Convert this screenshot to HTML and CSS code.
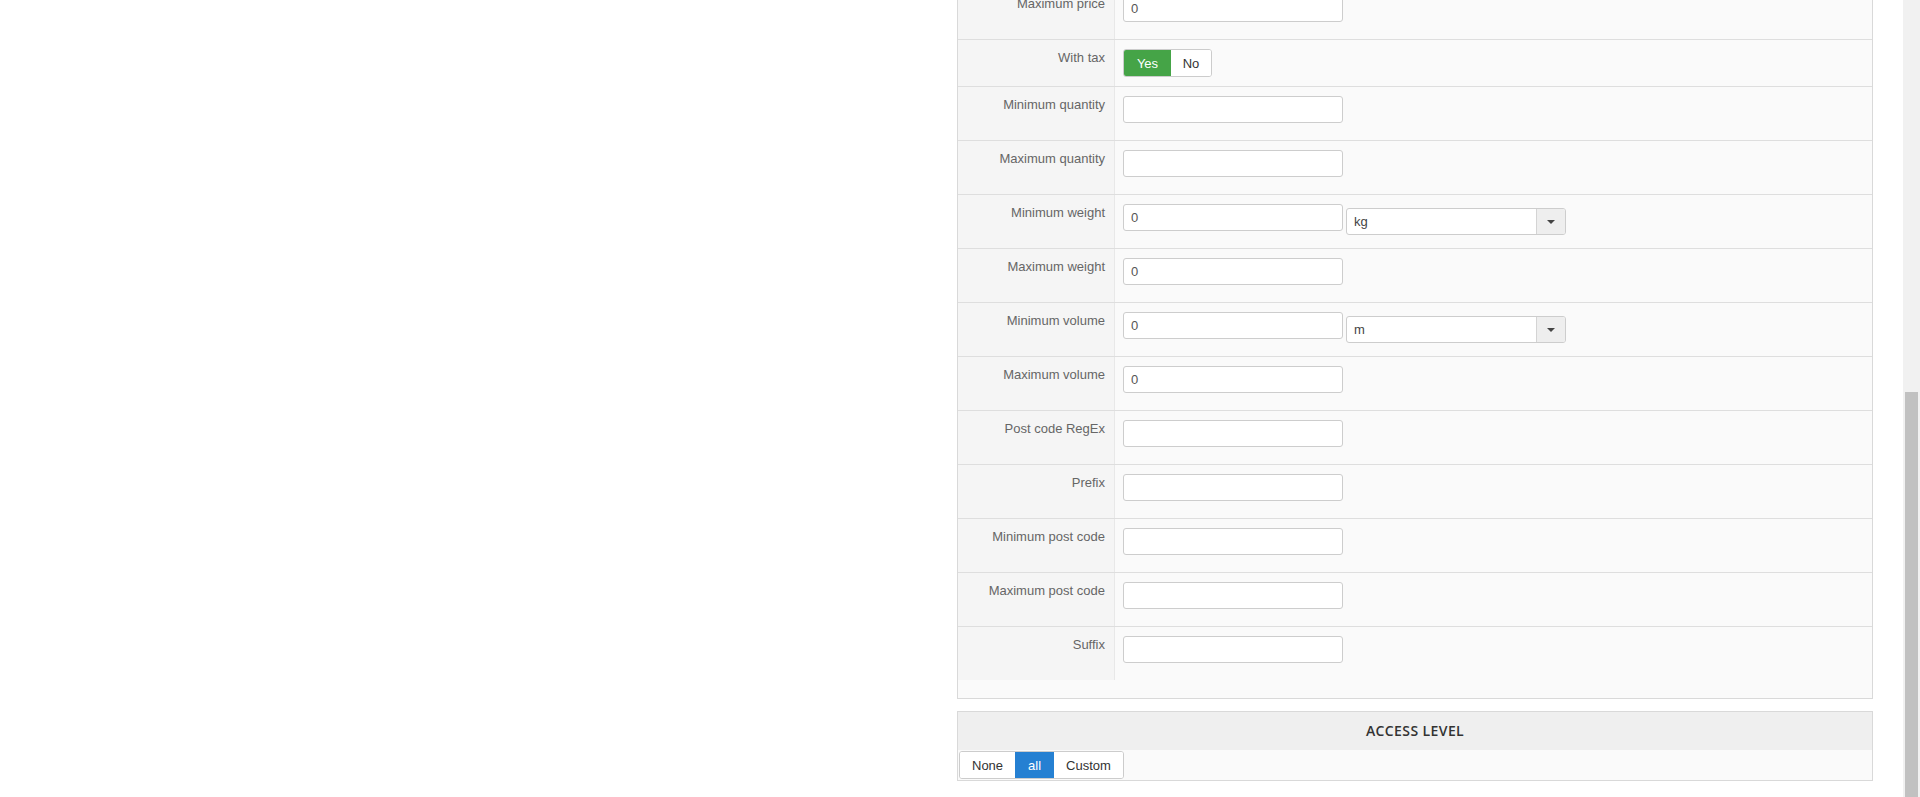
FILE: index.html
```html
<!DOCTYPE html>
<html lang="en">
<head>
    <meta charset="UTF-8">
    <meta name="viewport" content="width=device-width, initial-scale=1.0">
    <title>Shipping Rule</title>
    <link rel="stylesheet" href="styles.css">
</head>
<body>
    <div class="viewport" id="viewport">
        <div class="content">
            <form class="panel" action="/shipping_rule" method="post">
                <div class="panel-heading">Conditions</div>

                <div class="form-row">
                    <label class="field-label" for="name">Name</label>
                    <div class="field-value"><input type="text" id="name" name="name"></div>
                </div>
                <div class="form-row">
                    <label class="field-label" for="transitTime">Transit time</label>
                    <div class="field-value"><input type="text" id="transitTime" name="transitTime"></div>
                </div>
                <div class="form-row">
                    <label class="field-label" for="carrier">Carrier</label>
                    <div class="field-value"><input type="text" id="carrier" name="carrier"></div>
                </div>
                <div class="form-row">
                    <label class="field-label" for="zone">Zone</label>
                    <div class="field-value"><input type="text" id="zone" name="zone"></div>
                </div>
                <div class="form-row">
                    <label class="field-label" for="country">Country</label>
                    <div class="field-value"><input type="text" id="country" name="country"></div>
                </div>
                <div class="form-row">
                    <label class="field-label" for="state">State</label>
                    <div class="field-value"><input type="text" id="state" name="state"></div>
                </div>
                <div class="form-row">
                    <label class="field-label" for="group">Customer group</label>
                    <div class="field-value"><input type="text" id="group" name="group"></div>
                </div>
                <div class="form-row">
                    <label class="field-label" for="currency">Currency</label>
                    <div class="field-value"><input type="text" id="currency" name="currency"></div>
                </div>
                <div class="form-row">
                    <label class="field-label" for="shop">Shop</label>
                    <div class="field-value"><input type="text" id="shop" name="shop"></div>
                </div>
                <div class="form-row">
                    <label class="field-label" for="priority">Priority</label>
                    <div class="field-value"><input type="text" id="priority" name="priority" value="0"></div>
                </div>
                <div class="form-row">
                    <label class="field-label" for="dateFrom">Date from</label>
                    <div class="field-value"><input type="text" id="dateFrom" name="dateFrom"></div>
                </div>
                <div class="form-row">
                    <label class="field-label" for="dateTo">Date to</label>
                    <div class="field-value"><input type="text" id="dateTo" name="dateTo"></div>
                </div>
                <div class="form-row">
                    <label class="field-label" for="minPrice">Minimum price</label>
                    <div class="field-value"><input type="text" id="minPrice" name="minPrice" value="0"></div>
                </div>
                <div class="form-row">
                    <label class="field-label" for="maxPrice">Maximum price</label>
                    <div class="field-value"><input type="text" id="maxPrice" name="maxPrice" value="0"></div>
                </div>
                <div class="form-row">
                    <label class="field-label">With tax</label>
                    <div class="field-value field-value-short">
                        <div class="switch">
                            <button type="button" class="switch-on active">Yes</button>
                            <button type="button" class="switch-off">No</button>
                        </div>
                    </div>
                </div>
                <div class="form-row">
                    <label class="field-label" for="minQuantity">Minimum quantity</label>
                    <div class="field-value"><input type="text" id="minQuantity" name="minQuantity"></div>
                </div>
                <div class="form-row">
                    <label class="field-label" for="maxQuantity">Maximum quantity</label>
                    <div class="field-value"><input type="text" id="maxQuantity" name="maxQuantity"></div>
                </div>
                <div class="form-row">
                    <label class="field-label" for="minWeight">Minimum weight</label>
                    <div class="field-value">
                        <input type="text" id="minWeight" name="minWeight" value="0">
                        <div class="select">
                            <span class="select-text">kg</span>
                            <span class="select-arrow"></span>
                        </div>
                    </div>
                </div>
                <div class="form-row">
                    <label class="field-label" for="maxWeight">Maximum weight</label>
                    <div class="field-value"><input type="text" id="maxWeight" name="maxWeight" value="0"></div>
                </div>
                <div class="form-row">
                    <label class="field-label" for="minVolume">Minimum volume</label>
                    <div class="field-value">
                        <input type="text" id="minVolume" name="minVolume" value="0">
                        <div class="select">
                            <span class="select-text">m</span>
                            <span class="select-arrow"></span>
                        </div>
                    </div>
                </div>
                <div class="form-row">
                    <label class="field-label" for="maxVolume">Maximum volume</label>
                    <div class="field-value"><input type="text" id="maxVolume" name="maxVolume" value="0"></div>
                </div>
                <div class="form-row">
                    <label class="field-label" for="postcodeRegex">Post code RegEx</label>
                    <div class="field-value"><input type="text" id="postcodeRegex" name="postcodeRegex"></div>
                </div>
                <div class="form-row">
                    <label class="field-label" for="prefix">Prefix</label>
                    <div class="field-value"><input type="text" id="prefix" name="prefix"></div>
                </div>
                <div class="form-row">
                    <label class="field-label" for="minPostcode">Minimum post code</label>
                    <div class="field-value"><input type="text" id="minPostcode" name="minPostcode"></div>
                </div>
                <div class="form-row">
                    <label class="field-label" for="maxPostcode">Maximum post code</label>
                    <div class="field-value"><input type="text" id="maxPostcode" name="maxPostcode"></div>
                </div>
                <div class="form-row">
                    <label class="field-label" for="suffix">Suffix</label>
                    <div class="field-value"><input type="text" id="suffix" name="suffix"></div>
                </div>
            </form>

            <div class="panel access-panel">
                <div class="panel-heading">Access level</div>
                <div class="access-body">
                    <div class="btn-group">
                        <button type="button">None</button>
                        <button type="button" class="active">all</button>
                        <button type="button">Custom</button>
                    </div>
                </div>
            </div>
        </div>
    </div>

    <div class="scroll-rail" id="scrollRail">
        <div class="scroll-thumb" id="scrollThumb"></div>
    </div>

    <script>
        const view = document.getElementById('viewport');
        const rail = document.getElementById('scrollRail');
        const thumb = document.getElementById('scrollThumb');

        function updateThumb() {
            const railHeight = rail.clientHeight;
            const ratio = view.clientHeight / view.scrollHeight;
            thumb.style.height = Math.round(railHeight * ratio) + 'px';
            thumb.style.marginTop = Math.round(railHeight * view.scrollTop / view.scrollHeight) + 'px';
        }

        // open at the end of the form
        function scrollToEnd() {
            view.scrollTop = view.scrollHeight;
            updateThumb();
        }

        view.addEventListener('scroll', updateThumb);
        window.addEventListener('load', scrollToEnd);
        scrollToEnd();
    </script>
</body>
</html>
```

FILE: styles.css
```css
body {
    display: flex;
    height: 100vh;
    margin: 0;
    overflow: hidden;
    background-color: #fff;
    font-family: "Liberation Sans", Arial, sans-serif;
    font-size: 13px;
    color: #555;
}

.viewport {
    flex: 1;
    overflow-y: auto;
    scrollbar-width: none;
}

.viewport::-webkit-scrollbar {
    display: none;
}

.scroll-rail {
    width: 17px;
    flex-shrink: 0;
    background-color: #f1f1f1;
}

.scroll-thumb {
    width: 13px;
    margin-left: 2px;
    background-color: #c1c1c1;
}

.content {
    width: 916px;
    margin-left: 957px;
    padding: 16px 0;
}

.panel {
    display: block;
    margin: 0;
    padding-bottom: 18px;
    background-color: #fafafa;
    border: 1px solid #d9d9d9;
    border-top: none;
}

.panel-heading {
    height: 38px;
    line-height: 38px;
    background-color: #efefef;
    border-top: 1px solid #d9d9d9;
    text-align: center;
    text-transform: uppercase;
    font-family: "Open Sans", sans-serif;
    font-weight: 600;
    font-size: 14px;
    letter-spacing: 0.4px;
    color: #333;
}

.form-row {
    display: grid;
    grid-template-columns: 157px 1fr;
    border-top: 1px solid #dedede;
}

.field-label {
    box-sizing: border-box;
    padding: 10px 9px 0 0;
    text-align: right;
    font-size: 13px;
    line-height: 16px;
    color: #666;
    background-color: #f5f5f5;
    border-right: 1px solid #e8e8e8;
}

.field-value {
    display: flex;
    align-items: flex-start;
    padding: 9px 8px 17px 8px;
}

.field-value-short {
    padding-bottom: 9px;
}

.field-value input {
    box-sizing: border-box;
    width: 220px;
    height: 27px;
    margin: 0;
    padding: 0 7px;
    border: 1px solid #cdcdcd;
    border-radius: 3px;
    background-color: #fff;
    font-family: "Liberation Sans", Arial, sans-serif;
    font-size: 13px;
    color: #555;
}

.select {
    box-sizing: border-box;
    display: flex;
    width: 220px;
    height: 27px;
    margin: 4px 0 -4px 3px;
    border: 1px solid #cdcdcd;
    border-radius: 3px;
    background-color: #fff;
    overflow: hidden;
}

.select-text {
    flex: 1;
    padding-left: 7px;
    line-height: 25px;
    color: #444;
}

.select-arrow {
    width: 28px;
    display: flex;
    align-items: center;
    justify-content: center;
    background-color: #eee;
    border-left: 1px solid #d4d4d4;
}

.select-arrow::after {
    content: "";
    border-left: 4px solid transparent;
    border-right: 4px solid transparent;
    border-top: 4px solid #444;
}

.switch,
.btn-group {
    display: inline-flex;
    border: 1px solid #ccc;
    border-radius: 3px;
    background-color: #fff;
    overflow: hidden;
}

.switch button,
.btn-group button {
    height: 26px;
    min-width: 39px;
    padding: 0 12px;
    border: none;
    background-color: #fff;
    font-family: "Liberation Sans", Arial, sans-serif;
    font-size: 13px;
    color: #333;
    cursor: pointer;
}

.switch .switch-on {
    width: 47px;
    padding: 0;
}

.switch .switch-off {
    width: 40px;
    padding: 0;
}

.switch .active {
    background-color: #45a447;
    color: #fff;
}

.btn-group .active {
    background-color: #2580d2;
    color: #fff;
}

.access-panel {
    margin-top: 12px;
    padding: 0 0 1px 0;
}

.access-body {
    padding: 1px 1px 0 1px;
}
```
